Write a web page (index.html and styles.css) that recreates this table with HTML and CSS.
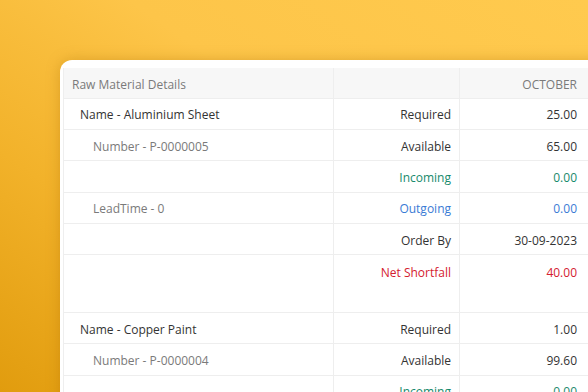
FILE: index.html
```html
<!DOCTYPE html>
<html>
<head>
<meta charset="utf-8">
<link rel="stylesheet" href="styles.css">
</head>
<body>
<div class="stage">
  <div class="card">
    <div class="table">
      <div class="cell head c1">Raw Material Details</div>
      <div class="cell head c2"></div>
      <div class="cell head c3">OCTOBER</div>

      <div class="cell c1 name">Name - Aluminium Sheet</div>
      <div class="cell c2">Required</div>
      <div class="cell c3">25.00</div>

      <div class="cell c1 sub">Number - P-0000005</div>
      <div class="cell c2">Available</div>
      <div class="cell c3">65.00</div>

      <div class="cell c1"></div>
      <div class="cell c2 green">Incoming</div>
      <div class="cell c3 green">0.00</div>

      <div class="cell c1 sub">LeadTime - 0</div>
      <div class="cell c2 blue">Outgoing</div>
      <div class="cell c3 blue">0.00</div>

      <div class="cell c1"></div>
      <div class="cell c2">Order By</div>
      <div class="cell c3">30-09-2023</div>

      <div class="cell c1 tall"></div>
      <div class="cell c2 red tall">Net Shortfall</div>
      <div class="cell c3 red tall">40.00</div>

      <div class="cell c1 name">Name - Copper Paint</div>
      <div class="cell c2">Required</div>
      <div class="cell c3">1.00</div>

      <div class="cell c1 sub">Number - P-0000004</div>
      <div class="cell c2">Available</div>
      <div class="cell c3">99.60</div>

      <div class="cell c1"></div>
      <div class="cell c2 green">Incoming</div>
      <div class="cell c3 green">0.00</div>
    </div>
  </div>
</div>
</body>
</html>
```

FILE: styles.css
```css
html, body {
  margin: 0;
  padding: 0;
  width: 588px;
  height: 392px;
  overflow: hidden;
}
.stage {
  width: 588px;
  height: 392px;
  overflow: hidden;
  box-sizing: border-box;
  padding: 60px 0 0 60px;
  background: linear-gradient(215deg, #ffca4e 0%, #fdc549 40%, #f2b22a 70%, #e19c0e 100%);
  font-family: "Open Sans", "Noto Sans", sans-serif;
  font-size: 12px;
}
.card {
  width: 560px;
  height: 360px;
  background: #ffffff;
  border-radius: 12px 0 0 0;
  padding: 8px 0 0 3px;
  box-shadow: 0 0 14px rgba(170, 110, 0, 0.35);
}
.table {
  display: grid;
  grid-template-columns: 270px 126px 130px;
  grid-template-rows: 30.7px repeat(5, 31.3px) 58px repeat(3, 31.3px);
  border-left: 1px solid #eeeeee;
}
.cell {
  display: flex;
  align-items: center;
  padding-top: 2px;
  border-bottom: 1px solid #eeeeee;
  border-right: 1px solid #eeeeee;
  color: #333333;
  white-space: nowrap;
}
.head {
  background: #f7f7f7;
  color: #7a7a7a;
  padding-top: 3px;
}
.c1 { padding-left: 8px; }
.c2 { justify-content: flex-end; padding-right: 8px; }
.c3 { justify-content: flex-end; padding-right: 12px; }
.name { padding-left: 16px; color: #333333; }
.sub { padding-left: 29px; color: #7a7a7a; }
.green { color: #178a6c; }
.blue { color: #3a7bd5; }
.red { color: #d4202f; }
.tall {
  align-items: flex-start;
  padding-top: 9px;
}
```
